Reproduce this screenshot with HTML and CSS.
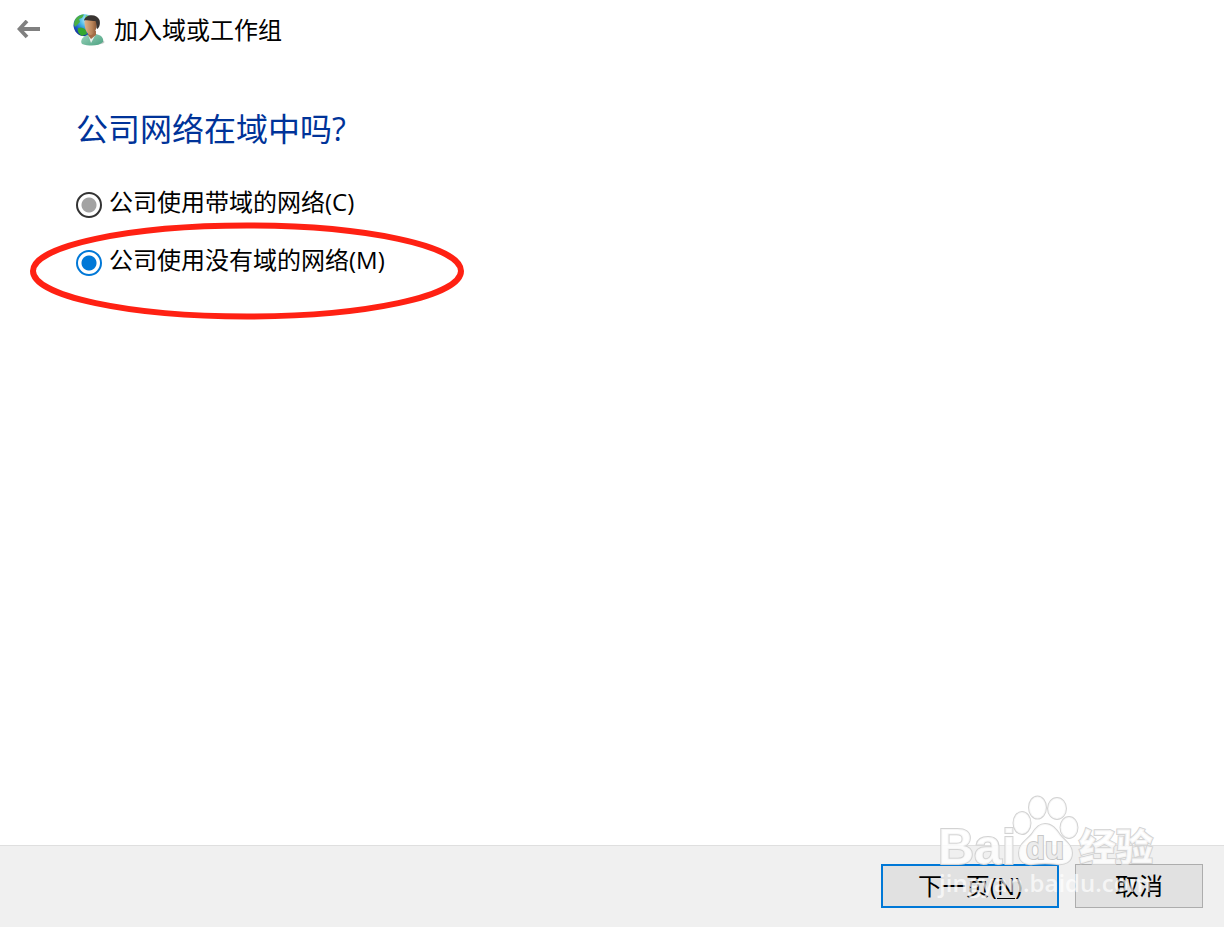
FILE: index.html
```html
<!DOCTYPE html>
<html lang="zh-CN">
<head>
    <meta charset="UTF-8">
    <meta name="viewport" content="width=device-width, initial-scale=1.0">
    <title>加入域或工作组</title>
    <link rel="stylesheet" href="styles.css">
</head>
<body>
    <header class="header">
        <button type="button" class="back-btn" aria-label="返回">
            <svg width="24" height="20" viewBox="0 0 24 20">
                <path d="M10 1 2.500 9l7.500 8M3 9h20" fill="none" stroke="#808080" stroke-width="3.800"/>
            </svg>
        </button>
        <svg class="app-icon" width="32" height="32" viewBox="0 0 32 32" aria-hidden="true">
            <defs>
                <radialGradient id="globe" cx="0.6" cy="0.25" r="0.8">
                    <stop offset="0" stop-color="#c5f6fd"/>
                    <stop offset="0.4" stop-color="#45b5e8"/>
                    <stop offset="0.75" stop-color="#1c55c4"/>
                    <stop offset="1" stop-color="#142b90"/>
                </radialGradient>
                <linearGradient id="face" x1="0" y1="0" x2="1" y2="0">
                    <stop offset="0" stop-color="#dfb48c"/>
                    <stop offset="0.6" stop-color="#b98459"/>
                    <stop offset="1" stop-color="#865332"/>
                </linearGradient>
                <linearGradient id="shirt" x1="0" y1="0" x2="1" y2="1">
                    <stop offset="0" stop-color="#9bd4bc"/>
                    <stop offset="1" stop-color="#4ca181"/>
                </linearGradient>
            </defs>
            <ellipse cx="24" cy="28" rx="7.500" ry="2.500" fill="#c9cdcb"/>
            <circle cx="11.500" cy="11.200" r="11" fill="url(#globe)"/>
            <path d="M2 6C4 2 8 .5 11 .5L9 4 6 5 7 8 4 11 2 13C.5 11 1 8 2 6z" fill="#4caf45"/>
            <path d="M5 14c3-1.500 6 0 8 2l1 4-5 2c-3-2-5-4-4-8z" fill="#35a72f"/>
            <path d="M13 1l5 2-3 2-3-1z" fill="#80cf63"/>
            <path d="M9 30c-2-3 0-6 3-8l4-2h7c5 1 8 4 7 8-4 4-13 4.500-21 2z" fill="url(#shirt)"/>
            <path d="M15 20l3 9 5-9z" fill="#e8efeb"/>
            <path d="M15 17v4l3 4 5-4v-4z" fill="#a46d46"/>
            <path d="M11.500 8c0-4 12-4 12.500 0 0 6-2 12-6 13-4 0-6.500-6-6.500-13z" fill="url(#face)"/>
            <path d="M11 6.500c1-6.500 13-7.500 15.500-.5 1 4 0 7-2 9l-1-1c0-3 0-5-1-7-4 0-7.500-1.500-11.500-.5z" fill="#393431"/>
        </svg>
        <span class="header-title">加入域或工作组</span>
    </header>

    <main class="content">
        <h1>公司网络在域中吗?</h1>
        <form id="network-form" class="options">
            <div class="option">
                <input type="radio" id="network-domain" name="network" value="domain">
                <label for="network-domain">公司使用带域的网络(C)</label>
            </div>
            <div class="option">
                <input type="radio" id="network-workgroup" name="network" value="workgroup" checked>
                <label for="network-workgroup">公司使用没有域的网络(M)</label>
                <svg class="highlight" width="436" height="98" viewBox="0 0 436 98" aria-hidden="true">
                    <ellipse cx="218" cy="49" rx="214" ry="45.500"/>
                </svg>
            </div>
        </form>
    </main>

    <footer class="footer">
        <button type="submit" form="network-form" class="btn btn-primary">下一页(<u>N</u>)</button>
        <button type="button" class="btn">取消</button>
        <svg class="watermark" width="226" height="108" viewBox="0 0 226 108">
            <g class="mark">
                <ellipse cx="85" cy="28" rx="8.500" ry="11"/>
                <ellipse cx="100.500" cy="12.500" rx="8.500" ry="11"/>
                <ellipse cx="120" cy="13.500" rx="9" ry="10.500"/>
                <ellipse cx="132" cy="32.500" rx="8.500" ry="10.500"/>
                <path d="M108 29c-6 0-10 5-13 10-5 6-13 10-13 19 0 9 6 12 14 11 8-1 16-1 24 0 8 1 15-2 15-11 0-8-7-12-12-18-4-6-8-11-15-11z"/>
                <text class="mark-latin" x="1" y="69">Bai</text>
                <text class="mark-inner" x="89" y="64">du</text>
                <text class="mark-cjk" x="142" y="66">经验</text>
            </g>
            <text class="mark-url" x="2" y="97">jingyan.baidu.com</text>
        </svg>
    </footer>
</body>
</html>
```
FILE: styles.css
```css
:root {
    --accent: #0078d7;
    --heading: #003399;
    --footer-bg: #f0f0f0;
    --button-bg: #e1e1e1;
}

body {
    font-family: "Open Sans", "Noto Sans CJK SC", sans-serif;
    font-size: 24px;
    line-height: 32px;
    margin: 0;
    min-height: 100vh;
    display: flex;
    flex-direction: column;
    background-color: white;
    color: #000;
}

button {
    font: inherit;
    color: inherit;
    padding: 0;
    cursor: pointer;
}

.header {
    display: flex;
    align-items: center;
    padding: 14px 17px;
}

.back-btn {
    display: flex;
    border: none;
    background: none;
}

.app-icon {
    margin: 0 9px 0 32px;
}

.content {
    flex: 1;
    padding: 49px 76px;
}

h1 {
    margin: 0 0 37px;
    font-size: 32px;
    line-height: 40px;
    font-weight: 400;
    color: var(--heading);
}

.options {
    display: flex;
    flex-direction: column;
    gap: 26px;
}

.option {
    position: relative;
    display: flex;
    align-items: flex-end;
    gap: 7px;
    align-self: flex-start;
}

.option input {
    appearance: none;
    box-sizing: border-box;
    width: 26px;
    height: 26px;
    margin: 0;
    border: 2px solid #333;
    border-radius: 50%;
    background: radial-gradient(circle, #a3a3a3 7px, white 8px);
}

.option input:checked {
    border-color: var(--accent);
    background: radial-gradient(circle, var(--accent) 7px, white 8px);
}

.highlight {
    position: absolute;
    top: -22px;
    left: -47px;
    fill: none;
    stroke: #ff2113;
    stroke-width: 6px;
    pointer-events: none;
}

.footer {
    position: relative;
    display: flex;
    justify-content: flex-end;
    gap: 16px;
    padding: 18px 21px 19px;
    background-color: var(--footer-bg);
    border-top: 1px solid #dfdfdf;
}

.btn {
    box-sizing: border-box;
    width: 128px;
    height: 44px;
    border: 1px solid #adadad;
    background-color: var(--button-bg);
}

.btn-primary {
    width: 178px;
    border: 2px solid var(--accent);
}

.btn u {
    text-decoration-thickness: 1px;
    text-underline-offset: 3px;
}

.watermark {
    position: absolute;
    right: 61px;
    bottom: 24px;
    pointer-events: none;
}

.mark {
    fill: rgba(255, 255, 255, 0.8);
    stroke: #d3d3d3;
    stroke-width: 2px;
    paint-order: stroke;
}

.mark-latin {
    font: bold 50px "Liberation Sans", sans-serif;
}

.mark-inner {
    font: bold 31px "Liberation Sans", sans-serif;
    fill: #ececec;
    stroke: #c8c8c8;
}

.mark-cjk {
    font: 900 37px "Noto Sans CJK SC", sans-serif;
}

.mark-url {
    font: 600 24px "Open Sans", sans-serif;
    fill: rgba(255, 255, 255, 0.7);
}
```
